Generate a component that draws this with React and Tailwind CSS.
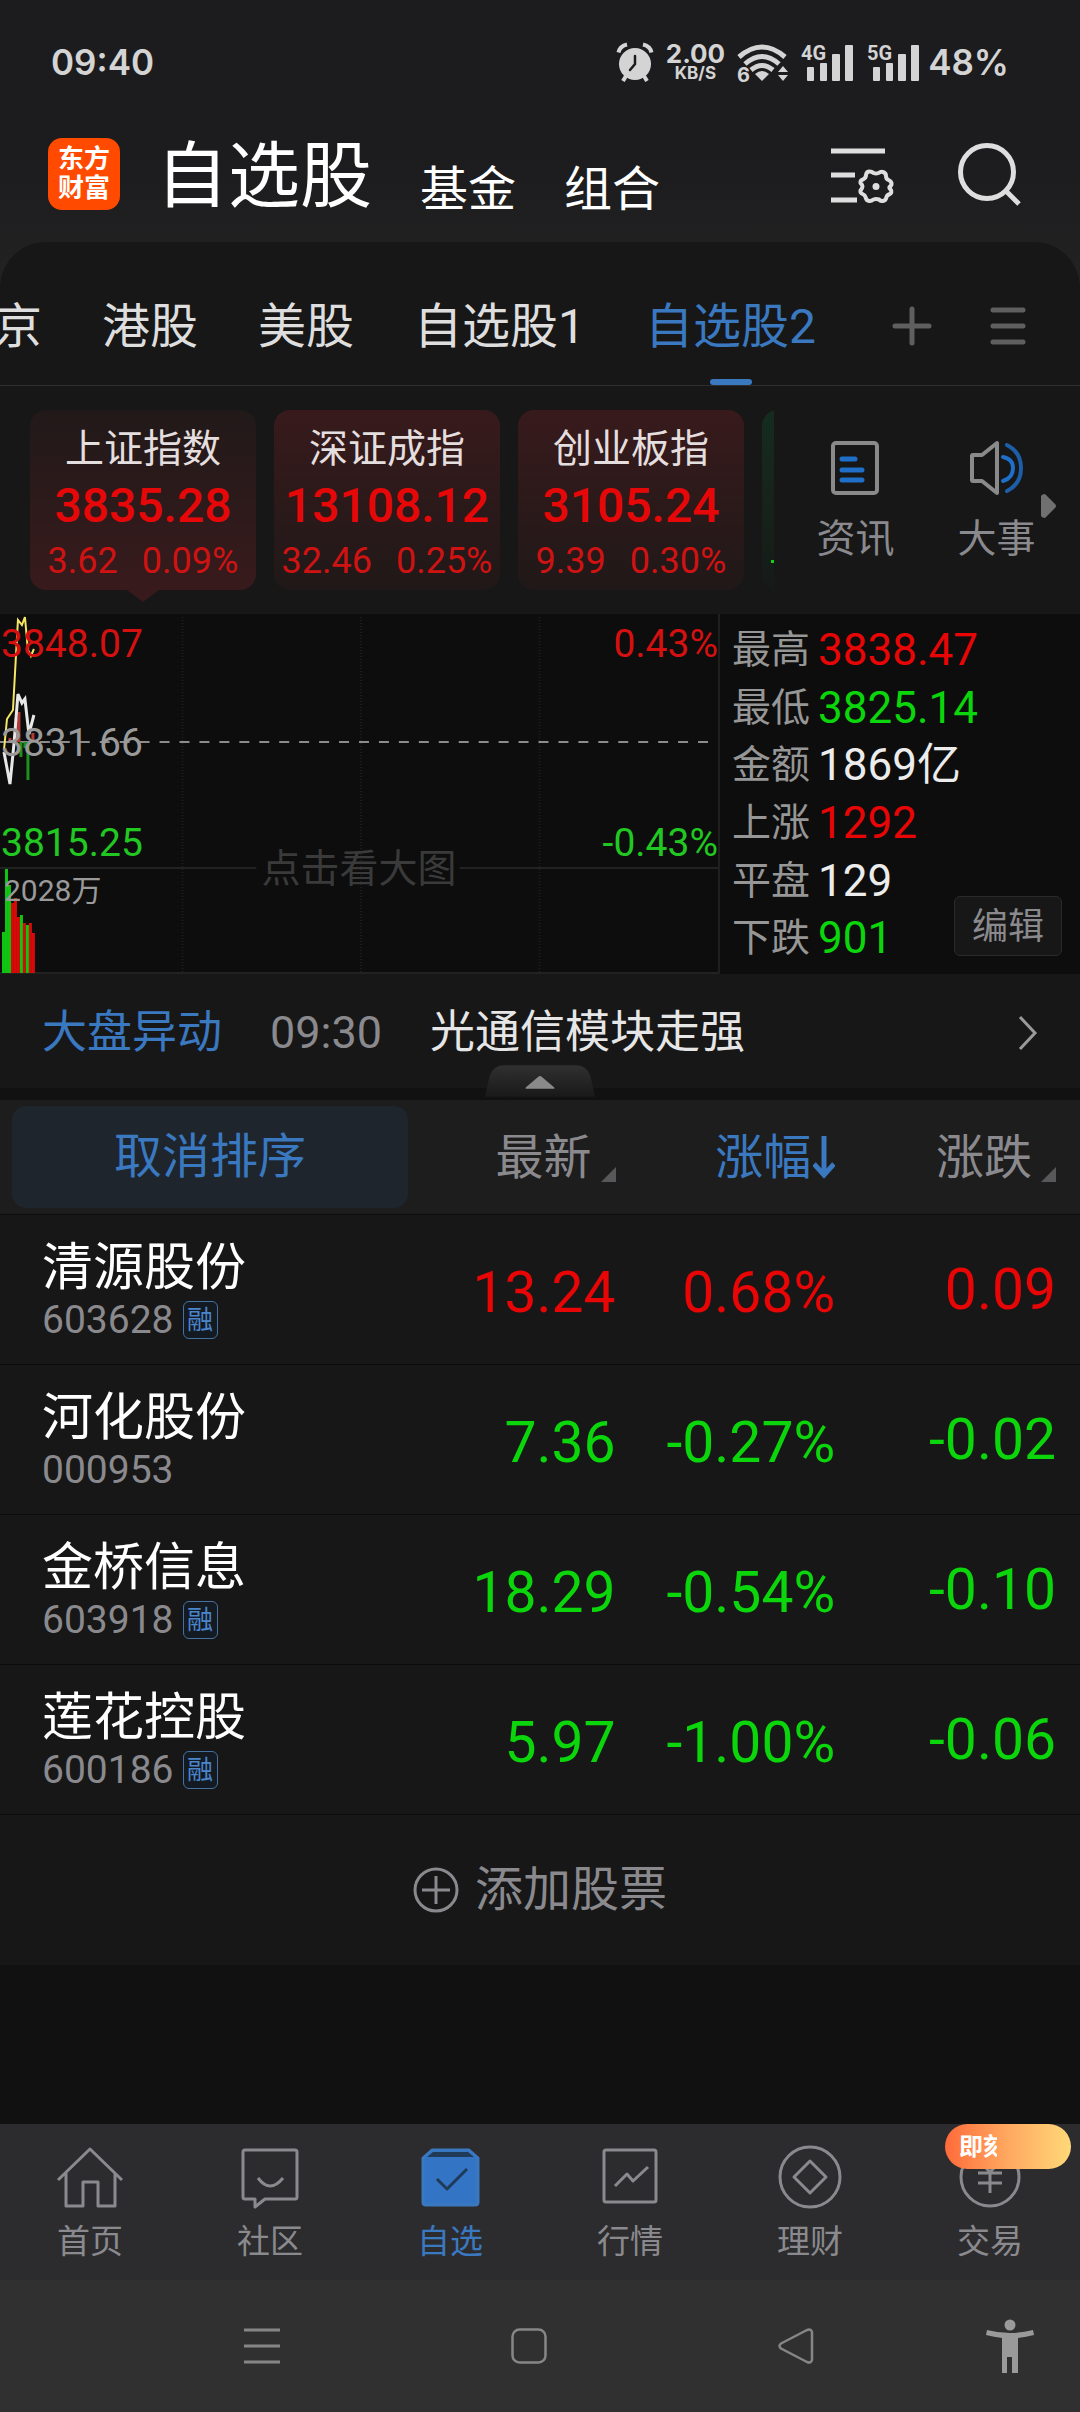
const UP = "text-[#e80505]";
const DOWN = "text-[#0bd60b]";

const tabs = ["京", "港股", "美股", "自选股1", "自选股2"];

const indices = [
  { name: "上证指数", price: "3835.28", change: "3.62", pct: "0.09%", active: true },
  { name: "深证成指", price: "13108.12", change: "32.46", pct: "0.25%" },
  { name: "创业板指", price: "3105.24", change: "9.39", pct: "0.30%" },
];

const stats = [
  { label: "最高", value: "3838.47", color: UP },
  { label: "最低", value: "3825.14", color: DOWN },
  { label: "金额", value: "1869亿", color: "text-[#ececec]" },
  { label: "上涨", value: "1292", color: UP },
  { label: "平盘", value: "129", color: "text-[#ececec]" },
  { label: "下跌", value: "901", color: DOWN },
];

const stocks = [
  { name: "清源股份", code: "603628", margin: true, price: "13.24", pct: "0.68%", change: "0.09", up: true },
  { name: "河化股份", code: "000953", margin: false, price: "7.36", pct: "-0.27%", change: "-0.02" },
  { name: "金桥信息", code: "603918", margin: true, price: "18.29", pct: "-0.54%", change: "-0.10" },
  { name: "莲花控股", code: "600186", margin: true, price: "5.97", pct: "-1.00%", change: "-0.06" },
];

// volume bars: [x, top, up]
const volumes = [
  [2, 318, false], [5, 255, false], [8, 271, false], [11, 289, true],
  [14, 284, true], [17, 303, true], [20, 301, false], [23, 309, true],
  [26, 311, false], [29, 309, true], [32, 319, true],
];

function SignalBars({ label }) {
  return (
    <svg className="overflow-visible" width="54" height="40" viewBox="0 0 54 40" fill="#d4d4d4">
      <text x="0" y="18" fontSize="20" fontWeight="700" fontFamily="Roboto, sans-serif">{label}</text>
      <rect x="6" y="25" width="7" height="14" rx="1" />
      <rect x="19" y="21" width="7" height="18" rx="1" />
      <rect x="31" y="12" width="8" height="27" rx="1" />
      <rect x="44" y="3" width="8" height="36" rx="1" />
    </svg>
  );
}

function StatusBar() {
  return (
    <div className="flex h-[124px] items-center justify-between pr-[71px] pl-[51px] font-[Inter,sans-serif] text-[35px] font-semibold text-[#d4d4d4]">
      <span>09:40</span>
      <div className="flex items-center">
        <svg width="38" height="40" viewBox="0 0 38 40" fill="none" stroke="#d4d4d4">
          <circle cx="19" cy="22" r="16" fill="#d4d4d4" stroke="none" />
          <path d="M2.500 10.500Q4 4 11 2.500M35.500 10.500Q34 4 27 2.500" strokeWidth="4" />
          <path d="M10 34l-3 5M28 34l3 5" strokeWidth="4" />
          <path d="M19 14v8l-5 6" stroke="#1c1c1e" strokeWidth="2.500" strokeLinecap="round" />
        </svg>
        <div className="ml-[12px] flex flex-col items-center font-bold">
          <span className="text-[26px] leading-[22px]">2.00</span>
          <span className="text-[17px] leading-[17px]">KB/S</span>
        </div>
        <svg className="ml-[12px] overflow-visible" width="52" height="40" viewBox="0 0 52 40" fill="none" stroke="#d4d4d4" strokeWidth="5">
          <path d="M2 15Q25-5 48 15" />
          <path d="M8 22Q25 7 42 22" />
          <path d="M14 28Q25 19 36 28" />
          <path d="M18 32Q25 26 32 32L25 39Z" fill="#d4d4d4" stroke="none" />
          <path d="M41 30l5-6 5 6zM41 33l5 6 5-6z" fill="#d4d4d4" stroke="none" />
          <text x="0" y="40" fontSize="20" fontWeight="700" fill="#d4d4d4" stroke="none">6</text>
        </svg>
        <div className="ml-[12px] flex gap-[12px]">
          <SignalBars label="4G" />
          <SignalBars label="5G" />
        </div>
        <span className="ml-[7px]">48%</span>
      </div>
    </div>
  );
}

function Header() {
  return (
    <header className="flex items-center pt-[9px] pr-[58px] pb-[27px] pl-[48px]">
      <div className="flex size-[72px] flex-col items-center justify-center rounded-[14px] bg-[#ff4a00] text-[26px] leading-[29px] font-bold text-white">
        <span>东方</span>
        <span>财富</span>
      </div>
      <nav className="ml-[36px] flex items-end gap-[48px] pt-[6px] text-[48px] leading-[50px] text-white">
        <a href="#watch" className="text-[72px] leading-[76px]">自选股</a>
        <a href="#fund">基金</a>
        <a href="#combo">组合</a>
      </nav>
      <button className="ml-auto" aria-label="列表设置">
        <svg width="64" height="64" viewBox="0 0 64 64" fill="none" stroke="#dedede">
          <path d="M0 9h54M0 33h24M0 58h26" strokeWidth="5" />
          <path
            d="M38.500 29.500Q41 29.500 42.500 31Q45 32 47.500 31Q50 29 52 30Q55 31 55 34Q55 37 57.500 38Q61 39.500 60.500 42.500Q60 44 58.500 45Q58 46.500 60 48Q61 51 59 52Q56 53 55.500 55Q55 58.500 52 59Q50 59.500 48 57.500Q45 56.500 42.500 57.500Q40 59.500 38 59Q35 58.500 34.500 55Q34 53 31.500 52Q29 51 29.500 48.500Q31.500 46 31.500 44.500Q31.500 43 29.500 41Q29 38 32 37.500Q35 36 35 33Q35.500 29.500 38.500 29.500Z"
            strokeWidth="4"
            strokeLinejoin="round"
          />
          <circle cx="45" cy="44.500" r="3.500" fill="#dedede" stroke="none" />
        </svg>
      </button>
      <button className="ml-[61px]" aria-label="搜索">
        <svg width="66" height="66" viewBox="0 0 66 66" fill="none" stroke="#dedede" strokeWidth="5">
          <circle cx="31" cy="31" r="26.500" />
          <path d="M50 50l13 13" />
        </svg>
      </button>
    </header>
  );
}

function TabStrip() {
  return (
    <div className="flex h-[144px] items-center border-b border-[#2e2e2e]">
      <div className="-ml-[6px] flex h-full gap-[60px] text-[48px] text-[#dedede]">
        {tabs.map((tab) => {
          const active = tab === "自选股2";
          return (
            <button
              key={tab}
              className={`relative h-full pt-[26px] whitespace-nowrap ${active ? "text-[#3a78c0]" : ""}`}
            >
              {tab}
              {active && (
                <span className="absolute bottom-0 left-1/2 h-[6px] w-[42px] -translate-x-1/2 rounded-full bg-[#3a78c0]" />
              )}
            </button>
          );
        })}
      </div>
      <button className="ml-auto pt-[24px]" aria-label="添加分组">
        <svg width="40" height="40" viewBox="0 0 40 40" stroke="#5f5f5f" strokeWidth="5" strokeLinecap="round">
          <path d="M3 20h34M20 3v34" />
        </svg>
      </button>
      <button className="mr-[54px] ml-[58px] pt-[24px]" aria-label="管理分组">
        <svg width="36" height="40" viewBox="0 0 36 40" stroke="#5f5f5f" strokeWidth="5" strokeLinecap="round">
          <path d="M3 4h30M3 20h30M3 36h30" />
        </svg>
      </button>
    </div>
  );
}

function IndexCard({ item }) {
  return (
    <button
      className={`relative flex h-[180px] w-[226px] shrink-0 flex-col items-center rounded-[16px] pt-[16px] text-[#e60808] ${
        item.active
          ? "bg-linear-to-b from-[#211919] to-[#381a1c]"
          : "bg-linear-to-b from-[#381a1c] to-[#201818]"
      }`}
    >
      <span className="text-[39px] leading-[46px] text-[#e4dede]">{item.name}</span>
      <span className="mt-[7px] text-[48px] leading-[54px] font-medium">{item.price}</span>
      <span className="mt-[7px] flex gap-[24px] text-[36px] leading-[42px] text-[#cf1212]">
        <span>{item.change}</span>
        <span>{item.pct}</span>
      </span>
      {item.active && (
        <svg className="absolute top-full left-1/2 -translate-x-1/2" width="32" height="12" viewBox="0 0 32 12">
          <path d="M0 0h32L16 12z" fill="#381a1c" />
        </svg>
      )}
    </button>
  );
}

function IndexSection() {
  return (
    <section className="flex h-[228px] items-start pt-[24px] pl-[30px]">
      <div className="flex h-[204px] w-[744px] gap-[18px] overflow-hidden">
        {indices.map((item) => (
          <IndexCard key={item.name} item={item} />
        ))}
        <div className="flex h-[180px] w-[226px] shrink-0 items-end rounded-[16px] bg-linear-to-b from-[#152c20] to-[#161a18] pb-[27px] pl-[9px]">
          <span className="h-[3px] w-[20px] bg-[#12d012]" />
        </div>
      </div>
      <div className="flex flex-1 items-start justify-center gap-[63px] pt-[30px] pl-[37px] text-[39px] leading-[46px] text-[#8a8a8e]">
        <button className="flex flex-col items-center gap-[20px]">
          <svg width="50" height="56" viewBox="0 0 50 56" fill="none" strokeLinecap="round">
            <rect x="3" y="3" width="44" height="50" rx="3" stroke="#8a8a8a" strokeWidth="4" />
            <path d="M12 19h13M12 30h20M12 40h20" stroke="#1f6fc8" strokeWidth="5" />
          </svg>
          资讯
        </button>
        <button className="flex flex-col items-center gap-[20px]">
          <svg width="56" height="56" viewBox="0 0 56 56" fill="none" strokeWidth="4" strokeLinecap="round" strokeLinejoin="round">
            <path d="M4 15h9L28 3v50L13 41H4q-1 0-1-1V16q0-1 1-1z" stroke="#8a8a8a" />
            <path d="M34 17Q44 19 44 28Q44 38 34 41" stroke="#1f6fc8" />
            <path d="M38 5Q52 12 52 28Q52 44 38 51" stroke="#1c5fa8" />
          </svg>
          大事
        </button>
      </div>
      <button className="w-[39px] pt-[84px]" aria-label="更多">
        <svg width="16" height="24" viewBox="0 0 16 24" fill="#707070">
          <path d="M0 2Q1 0 4 0L14 10Q16 12 14 14L4 24Q1 24 0 22Z" />
        </svg>
      </button>
    </section>
  );
}

function MarketChart() {
  return (
    <div className="relative w-2/3 border-r-2 border-[#1f1f1f] text-[39px] leading-[46px]">
      <svg className="block h-[360px] w-full" viewBox="0 0 720 360" preserveAspectRatio="none" fill="none">
        <path d="M183 3v355M362 3v355M541 3v355" stroke="#1d1d1d" strokeWidth="2" strokeDasharray="1 2" />
        <path d="M0 254h257M461 254h259M0 359h720" stroke="#222" strokeWidth="2" />
        <path d="M0 128h716" stroke="#8c8c8c" strokeWidth="2" strokeDasharray="10 10" />
        <path d="M10 124v4M16 104v24M19 98v30M33 119v9" stroke="#b33a3a" strokeWidth="3" />
        <path d="M21 128v15M25 128v6M28 128v38" stroke="#1f8f1f" strokeWidth="3" />
        <polyline points="4,136 7,105 13,96 18,6 22,11 25,3 28,36 31,42 34,35" stroke="#f5e663" strokeWidth="2" />
        <polyline points="4,138 10,170 14,130 18,80 22,89 25,85 29,120 34,101" stroke="#e8e8e8" strokeWidth="3" />
        {volumes.map(([x, top, up]) => (
          <rect key={x} x={x} y={top} width="3" height={359 - top} fill={up ? "#d60a0a" : "#12c412"} />
        ))}
      </svg>
      <span className="absolute top-[7px] left-px text-[#d41010]">3848.07</span>
      <span className="absolute top-[106px] left-px text-[#9a9a9a]">3831.66</span>
      <span className="absolute top-[206px] left-px text-[#22c822]">3815.25</span>
      <span className="absolute top-[7px] right-0 text-[#d41010]">0.43%</span>
      <span className="absolute top-[206px] right-0 text-[#22c822]">-0.43%</span>
      <span className="absolute top-[258px] left-[4px] text-[30px] leading-[38px] text-[#9a9a9a]">2028万</span>
      <a href="#chart" className="absolute top-[232px] left-1/2 -translate-x-1/2 whitespace-nowrap text-[#3a3a3a]">
        点击看大图
      </a>
    </div>
  );
}

function MarketPanel() {
  return (
    <section className="flex bg-[#0d0d0d]">
      <MarketChart />
      <div className="relative flex-1 py-[7px] pl-[12px]">
        <dl className="flex h-full flex-col justify-between">
          {stats.map((s) => (
            <div key={s.label} className="flex flex-1 items-center gap-[8px]">
              <dt className="text-[39px] leading-[46px] text-[#969696]">{s.label}</dt>
              <dd className={`text-[44px] leading-[50px] ${s.color}`}>{s.value}</dd>
            </div>
          ))}
        </dl>
        <button className="absolute right-[18px] bottom-[18px] h-[60px] w-[108px] rounded-[6px] border border-[#2a2a2a] bg-[#171717] pt-[2px] text-[36px] leading-[42px] text-[#8a8a8e]">
          编辑
        </button>
      </div>
    </section>
  );
}

function NewsRow() {
  return (
    <div className="relative border-b-[12px] border-[#111]">
      <a href="#news" className="flex h-[114px] items-center pt-[4px] pr-[42px] pl-[42px] text-[45px] leading-[54px]">
        <span className="text-[#3a78c0]">大盘异动</span>
        <time className="ml-[48px] text-[#8a8a8e]">09:30</time>
        <span className="ml-[48px] text-[#e6e6e6]">光通信模块走强</span>
        <svg className="ml-auto" width="20" height="36" viewBox="0 0 20 36" fill="none" stroke="#9a9a9a" strokeWidth="3">
          <path d="M2 2l15 16L2 34" />
        </svg>
      </a>
      <button className="absolute -bottom-[9px] left-1/2 -translate-x-1/2" aria-label="收起">
        <svg width="110" height="32" viewBox="0 0 112 32">
          <defs>
            <linearGradient id="handle" x1="0" y1="0" x2="0" y2="1">
              <stop offset="0" stopColor="#303030" />
              <stop offset="1" stopColor="#191919" />
            </linearGradient>
          </defs>
          <path d="M0 32L4 14Q7 0 20 0H92Q105 0 108 14L112 32Z" fill="url(#handle)" />
          <path d="M42 22L54 12Q56 10 58 12L70 22Q72 24 69 24H43Q40 24 42 22Z" fill="#8a8a8a" />
        </svg>
      </button>
    </div>
  );
}

function SortHead({ label }) {
  return (
    <button className="inline-flex items-end gap-[9px] align-middle">
      {label}
      <svg className="mb-[4px]" width="15" height="15" viewBox="0 0 15 15">
        <path d="M15 0v15H0z" fill="#58585a" />
      </svg>
    </button>
  );
}

function StockTable() {
  return (
    <table className="w-full table-fixed border-collapse">
      <thead className="bg-[#1d1d1d] text-[48px] leading-[56px] text-[#8a8a8e]">
        <tr className="h-[114px] border-b border-[#0c0c0c] text-right">
          <th className="w-[39%] py-0 pr-[13px] pl-[12px] font-normal">
            <button className="h-[102px] w-full rounded-[14px] bg-[#1e252d] text-[#3a78c0]">取消排序</button>
          </th>
          <th className="w-[18%] p-0 font-normal whitespace-nowrap">
            <SortHead label="最新" />
          </th>
          <th className="w-[22%] py-0 pr-[18px] pl-0 font-normal text-[#3a78c0]">
            <button className="inline-flex items-center gap-[2px] align-middle">
              涨幅
              <svg width="22" height="44" viewBox="0 0 22 44" fill="none" stroke="#3a78c0" strokeWidth="5">
                <path d="M11 0v38M1 28l10 11 10-11" />
              </svg>
            </button>
          </th>
          <th className="w-[21%] py-0 pr-[24px] pl-0 font-normal">
            <SortHead label="涨跌" />
          </th>
        </tr>
      </thead>
      <tbody>
        {stocks.map((s) => {
          const color = s.up ? UP : DOWN;
          return (
            <tr key={s.code} className={`h-[150px] border-b border-[#0c0c0c] text-right text-[57px] leading-[64px] ${color}`}>
              <td className="pt-[3px] pr-0 pb-0 pl-[42px] text-left">
                <div className="text-[51px] leading-[58px] text-white">{s.name}</div>
                <div className="flex items-center gap-[9px] text-[39px] leading-[46px] text-[#8a8a8e]">
                  {s.code}
                  {s.margin && (
                    <span className="flex h-[38px] w-[35px] items-center justify-center rounded-[6px] border border-[#44719f] bg-[#131a22] text-[26px] leading-[30px] text-[#4a86cc]">
                      融
                    </span>
                  )}
                </div>
              </td>
              <td className="px-0 pt-[7px] pb-0">{s.price}</td>
              <td className="pt-[7px] pr-[18px] pb-0 pl-0">{s.pct}</td>
              <td className="pt-px pr-[24px] pb-0 pl-0">{s.change}</td>
            </tr>
          );
        })}
      </tbody>
    </table>
  );
}

const navItems = [
  {
    label: "首页",
    icon: (
      <path d="M3 36L35 5l32 31M11 29v33h17V38h15v24h17V29" />
    ),
  },
  {
    label: "社区",
    icon: (
      <>
        <path d="M10 6h50q2 0 2 2v45q0 2-2 2H30l-10 8v-8H10q-2 0-2-2V8q0-2 2-2z" />
        <path d="M23 34q12 16 25 0" />
      </>
    ),
  },
  {
    label: "自选",
    active: true,
    icon: (
      <>
        <path d="M8 14L17 6h37l9 8v44q0 3-3 3H11q-3 0-3-3z" fill="#3375c4" />
        <path d="M12 13l6-5h35l6 5z" fill="#213a58" stroke="none" />
        <path d="M22 35l10 10 20-20" stroke="#213a58" />
      </>
    ),
  },
  {
    label: "行情",
    icon: (
      <>
        <rect x="9" y="6" width="52" height="52" rx="2" />
        <path d="M20 42l12-12 6 7 15-14" />
      </>
    ),
  },
  {
    label: "理财",
    icon: (
      <>
        <circle cx="35" cy="33" r="30" />
        <path d="M35 17l16 16-16 16-16-16z" />
      </>
    ),
  },
  {
    label: "交易",
    badge: "即刻",
    icon: (
      <>
        <circle cx="35" cy="33" r="29" />
        <path d="M24 17l11 11 11-11M23 29h24M23 39h24M35 28v21" />
      </>
    ),
  },
];

function BottomNav() {
  return (
    <nav className="grid h-[156px] grid-cols-6 bg-[#2c2c2e]">
      {navItems.map((item) => (
        <a
          key={item.label}
          href={`#${item.label}`}
          className={`relative flex flex-col items-center pt-[20px] text-[33px] leading-[40px] ${
            item.active ? "text-[#3a78c0]" : "text-[#8a8a8e]"
          }`}
        >
          <svg width="70" height="66" viewBox="0 0 70 66" fill="none" stroke="currentColor" strokeWidth="3" strokeLinejoin="round">
            {item.icon}
          </svg>
          <span className="mt-[12px]">{item.label}</span>
          {item.badge && (
            <span className="absolute top-0 right-[9px] flex h-[45px] w-[126px] items-center rounded-full bg-linear-to-r from-[#ff6a3a] via-[#ffa860] to-[#ffd878] pl-[14px] text-[24px] leading-[28px] font-bold text-white">
              <span className="w-[38px] overflow-hidden whitespace-nowrap">{item.badge}</span>
            </span>
          )}
        </a>
      ))}
    </nav>
  );
}

function SystemNav() {
  return (
    <div className="flex h-[132px] items-center bg-[#303030] pr-[46px] pl-[244px]">
      <div className="flex gap-[231px]">
        <button aria-label="最近任务">
          <svg width="36" height="38" viewBox="0 0 36 38" stroke="#868686" strokeWidth="3">
            <path d="M0 3h36M0 19h36M0 35h36" />
          </svg>
        </button>
        <button aria-label="主屏幕">
          <svg width="36" height="38" viewBox="0 0 36 38" fill="none" stroke="#868686" strokeWidth="2.500">
            <rect x="1.500" y="2.500" width="33" height="33" rx="7" />
          </svg>
        </button>
        <button aria-label="返回">
          <svg width="36" height="38" viewBox="0 0 36 38" fill="none" stroke="#868686" strokeWidth="2.500" strokeLinejoin="round">
            <path d="M3 16.500L29 3Q33 1.500 34 5V33Q33 36.500 29 35L3 21.500Q0 19 3 16.500Z" />
          </svg>
        </button>
      </div>
      <button className="ml-auto" aria-label="无障碍">
        <svg width="48" height="54" viewBox="0 0 48 54" fill="#9a9a9a">
          <circle cx="24" cy="6" r="5.500" />
          <path d="M1 11Q24 17 47 11L48 16Q40 18 32 19V54H26V38H21V54H16V19Q8 18 0 16Z" />
        </svg>
      </button>
    </div>
  );
}

export default function App() {
  return (
    <div className="flex min-h-screen flex-col bg-[#111] font-[Roboto,'Noto_Sans_CJK_SC',sans-serif]">
      <div className="bg-linear-to-b from-[#1c1c1e] from-40% to-[#272727]">
        <StatusBar />
        <Header />
        <div className="rounded-t-[46px] bg-[#171717]">
          <TabStrip />
        </div>
      </div>
      <main className="bg-[#171717]">
        <IndexSection />
        <MarketPanel />
        <NewsRow />
        <StockTable />
        <button className="flex h-[150px] w-full items-center justify-center gap-[16px] text-[48px] leading-[56px] text-[#8a8a8e]">
          <svg width="46" height="46" viewBox="0 0 46 46" fill="none" stroke="currentColor" strokeWidth="3">
            <circle cx="23" cy="23" r="21" />
            <path d="M9 23h28M23 9v28" />
          </svg>
          添加股票
        </button>
      </main>
      <footer className="mt-auto">
        <BottomNav />
        <SystemNav />
      </footer>
    </div>
  );
}
